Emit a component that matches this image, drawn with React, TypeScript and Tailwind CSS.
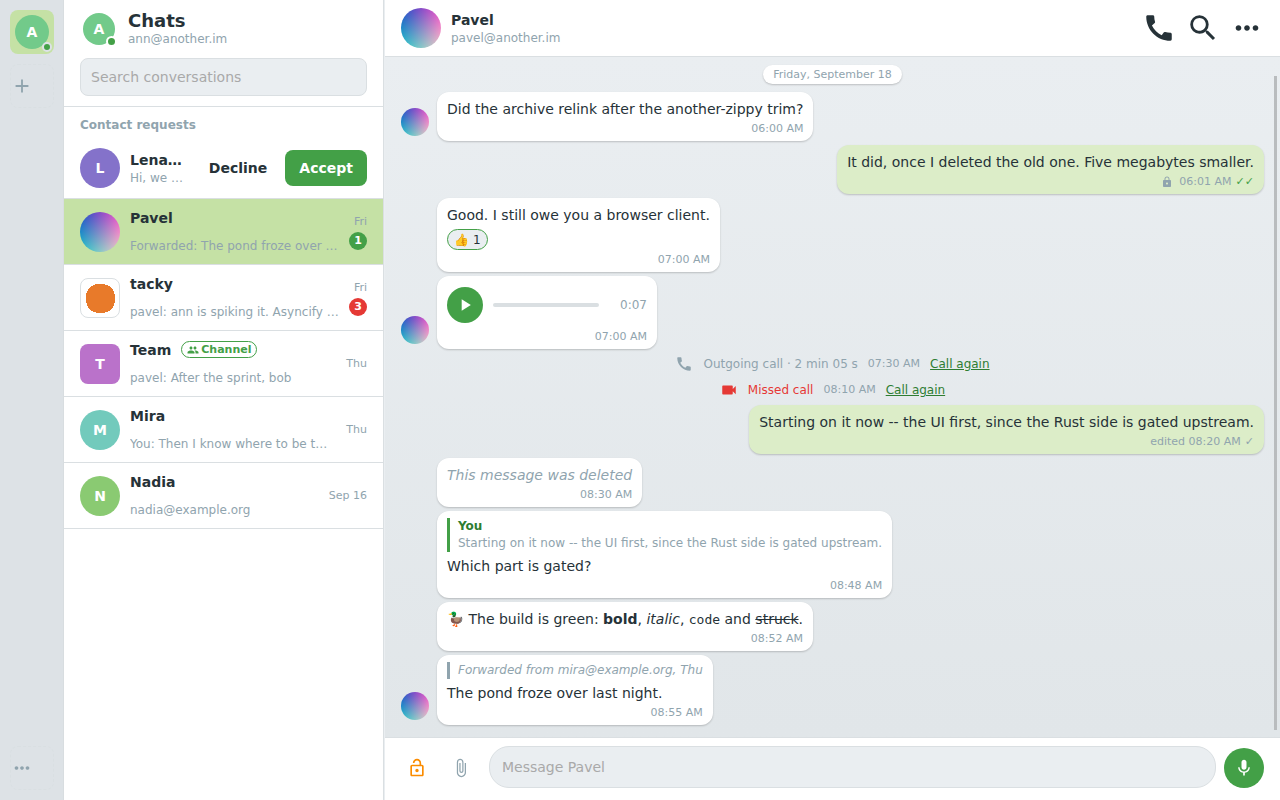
import { useState } from 'react'
import type { ReactNode } from 'react'
import {
  MdAdd,
  MdAttachFile,
  MdCall,
  MdGroup,
  MdLock,
  MdMic,
  MdMoreHoriz,
  MdOutlineLockOpen,
  MdPlayArrow,
  MdSearch,
  MdVideocam,
} from 'react-icons/md'

type Chat = {
  id: string
  name: string
  preview: string
  date: string
  avatar: ReactNode
  unread?: number
  mention?: boolean
  channel?: boolean
}

function LetterAvatar({ letter, className }: { letter: string; className: string }) {
  return (
    <span className={`flex shrink-0 items-center justify-center font-bold text-white ${className}`}>
      {letter}
    </span>
  )
}

function PavelAvatar({ className }: { className: string }) {
  return (
    <span
      className={`block shrink-0 rounded-full bg-[#0000c8] bg-[linear-gradient(to_right,#1c0000,#f00000),linear-gradient(to_bottom,#004c00,#00c800)] bg-blend-screen ${className}`}
    />
  )
}

function TackyAvatar() {
  return (
    <span className="block size-10 shrink-0 overflow-hidden rounded-lg border border-[#dadfe2] bg-white">
      <svg viewBox="0 0 38 38" className="size-full" shapeRendering="crispEdges">
        <rect x="5" y="5" width="29" height="29" rx="13" fill="#e87a2a" />
      </svg>
    </span>
  )
}

const chats: Chat[] = [
  {
    id: 'pavel',
    name: 'Pavel',
    preview: 'Forwarded: The pond froze over last night.',
    date: 'Fri',
    avatar: <PavelAvatar className="size-10" />,
    unread: 1,
  },
  {
    id: 'tacky',
    name: 'tacky',
    preview: 'pavel: ann is spiking it. Asyncify works so far',
    date: 'Fri',
    avatar: <TackyAvatar />,
    unread: 3,
    mention: true,
  },
  {
    id: 'team',
    name: 'Team',
    preview: 'pavel: After the sprint, bob',
    date: 'Thu',
    avatar: <LetterAvatar letter="T" className="size-10 rounded-lg bg-[#ba72ca]" />,
    channel: true,
  },
  {
    id: 'mira',
    name: 'Mira',
    preview: 'You: Then I know where to be twice a week',
    date: 'Thu',
    avatar: <LetterAvatar letter="M" className="size-10 rounded-full bg-[#72cabc]" />,
  },
  {
    id: 'nadia',
    name: 'Nadia',
    preview: 'nadia@example.org',
    date: 'Sep 16',
    avatar: <LetterAvatar letter="N" className="size-10 rounded-full bg-[#8aca72]" />,
  },
]

function Rail() {
  return (
    <nav className="flex w-16 shrink-0 flex-col justify-between border-r border-[#d8dde0] bg-[#dde2e6] p-2.5 pr-[9px]">
      <div className="flex flex-col gap-2.5">
        <button aria-label="ann@another.im" className="relative flex size-11 items-center justify-center rounded-lg bg-[#c5e1a5]">
          <LetterAvatar letter="A" className="size-[34px] rounded-full bg-[#72ca8a]" />
          <span className="absolute right-0.5 bottom-0.5 size-2.5 rounded-full border-2 border-[#dde2e6] bg-[#43a047]" />
        </button>
        <button aria-label="Add account" className="flex size-11 items-center rounded-lg border border-dashed border-[#d9dfe2] text-[#90a4ae]">
          <MdAdd className="size-[22px]" />
        </button>
      </div>
      <button aria-label="More" className="flex size-11 items-center rounded-lg border border-dashed border-[#d9dfe2] text-[#90a4ae]">
        <MdMoreHoriz className="size-[22px]" />
      </button>
    </nav>
  )
}

function ChatRow({ chat, selected, onSelect }: { chat: Chat; selected: boolean; onSelect: () => void }) {
  return (
    <li>
      <button
        onClick={onSelect}
        className={`flex h-[66px] w-full items-center gap-2.5 border-b border-[#dadfe2] px-4 text-left ${selected ? 'bg-[#c5e1a5]' : 'bg-white'}`}
      >
        {chat.avatar}
        <span className="flex min-w-0 flex-1 flex-col gap-2.5">
          <span className="flex h-[18px] items-center gap-2.5 text-sm font-bold">
            {chat.name}
            {chat.channel && (
              <span className="flex h-[17px] items-center gap-0.5 rounded-full border border-[#43a047] px-[5px] text-[11px] text-[#43a047]">
                <MdGroup className="size-3" />
                Channel
              </span>
            )}
          </span>
          <span className="truncate text-xs leading-[18px] text-[#90a4ae]">{chat.preview}</span>
        </span>
        <span className="flex flex-col items-end gap-[3px] text-[11px] leading-[15px] text-[#90a4ae]">
          {chat.date}
          {chat.unread && (
            <span className={`flex size-[18px] items-center justify-center rounded-full font-bold text-white ${chat.mention ? 'bg-[#e53935]' : 'bg-[#43a047]'}`}>
              {chat.unread}
            </span>
          )}
        </span>
      </button>
    </li>
  )
}

function Sidebar() {
  const [selected, setSelected] = useState('pavel')

  return (
    <aside className="flex w-80 shrink-0 flex-col border-r border-[#dadfe2] bg-white">
      <header className="border-b border-[#dadfe2] px-4 pt-2.5 pb-2.5">
        <div className="flex h-[38px] items-center gap-[13px] pl-[3px]">
          <span className="relative">
            <LetterAvatar letter="A" className="size-8 rounded-full bg-[#72ca8a] text-sm" />
            <span className="absolute -right-0.5 -bottom-0.5 size-[11px] rounded-full border-2 border-white bg-[#43a047]" />
          </span>
          <div className="pb-0.5">
            <h1 className="text-lg leading-[22px] font-bold">Chats</h1>
            <p className="text-xs leading-[14px] text-[#90a4ae]">ann@another.im</p>
          </div>
        </div>
        <input
          type="search"
          aria-label="Search conversations"
          placeholder="Search conversations"
          className="mt-2.5 block h-[38px] w-full rounded-lg border border-[#dadfe2] bg-[#eaeef1] px-2.5 text-sm outline-none placeholder:text-[#a9a9a9]"
        />
      </header>

      <section className="border-b border-[#dadfe2] px-4 pt-2.5 pb-2.5">
        <h2 className="text-xs leading-4 font-bold text-[#90a4ae]">Contact requests</h2>
        <div className="mt-[15px] flex items-center gap-2.5">
          <LetterAvatar letter="L" className="size-10 rounded-full bg-[#8472ca] text-sm" />
          <div className="min-w-0 flex-1 pt-0.5">
            <p className="truncate text-sm leading-[18px] font-bold">Lena Fischer</p>
            <p className="truncate text-xs leading-[18px] text-[#90a4ae]">Hi, we met at the meetup</p>
          </div>
          <div className="flex gap-1 text-sm font-bold">
            <button className="h-9 rounded-lg px-3.5">Decline</button>
            <button className="h-9 rounded-lg bg-[#43a047] px-3.5 text-white">Accept</button>
          </div>
        </div>
      </section>

      <ul>
        {chats.map((chat) => (
          <ChatRow key={chat.id} chat={chat} selected={chat.id === selected} onSelect={() => setSelected(chat.id)} />
        ))}
      </ul>
    </aside>
  )
}

function Bubble({ children, time, own, avatar }: { children: ReactNode; time: ReactNode; own?: boolean; avatar?: boolean }) {
  return (
    <div className={`flex items-end gap-2 ${own ? 'justify-end' : ''}`}>
      {!own && (avatar ? <PavelAvatar className="mb-[5px] size-7" /> : <span className="w-7 shrink-0" />)}
      <div className={`rounded-xl px-2.5 pt-[7px] pb-[5px] text-sm leading-[21px] shadow-[0_1px_2px_rgba(0,0,0,0.2)] ${own ? 'bg-[#dcedc8]' : 'bg-white'}`}>
        {children}
        <div className="mt-0.5 flex items-center justify-end gap-1 text-[11px] leading-[14px] text-[#90a4ae]">{time}</div>
      </div>
    </div>
  )
}

function CallRow({ icon, label, time, missed }: { icon: ReactNode; label: string; time: string; missed?: boolean }) {
  return (
    <div className={`flex h-[22px] items-center justify-center gap-2.5 text-xs ${missed ? 'text-[#e53935]' : 'text-[#90a4ae]'}`}>
      {icon}
      <span>{label}</span>
      <time className="text-[11px] text-[#90a4ae]">{time}</time>
      <button className="text-[#2e7d32] underline">Call again</button>
    </div>
  )
}

function Messages() {
  return (
    <div className="relative min-h-0 flex-1 bg-linear-to-b from-[#eaeef1] to-[#e1e6e9]">
      <div className="flex h-full flex-col gap-1 overflow-hidden px-4 py-2">
        <div className="mb-1 self-center rounded-full bg-white px-2.5 text-[11px] leading-[19px] text-[#90a4ae] shadow-[0_1px_2px_rgba(0,0,0,0.2)]">
          Friday, September 18
        </div>
        <Bubble avatar time="06:00 AM">
          <p>Did the archive relink after the another-zippy trim?</p>
        </Bubble>
        <Bubble
          own
          time={
            <>
              <MdLock className="mr-0.5 size-3" />
              06:01 AM <span className="text-[#43a047]">✓✓</span>
            </>
          }
        >
          <p>It did, once I deleted the old one. Five megabytes smaller.</p>
        </Bubble>
        <Bubble time="07:00 AM">
          <p>Good. I still owe you a browser client.</p>
          <button className="mt-[3px] mb-[3px] flex h-[21px] items-center gap-1 rounded-full border border-[#43a047] bg-[#eaeef1] px-1.5 text-xs">
            <span>👍</span>
            <span>1</span>
          </button>
        </Bubble>
        <Bubble avatar time="07:00 AM">
          <div className="flex w-[200px] items-center gap-2.5 pt-1 pb-[5px]">
            <button aria-label="Play" className="flex size-9 shrink-0 items-center justify-center rounded-full bg-[#43a047] text-white">
              <MdPlayArrow className="size-5" />
            </button>
            <span className="h-1 flex-1 rounded-full bg-[#dadfe2]" />
            <span className="w-[38px] text-right text-xs text-[#90a4ae]">0:07</span>
          </div>
        </Bubble>
        <CallRow icon={<MdCall className="size-[18px]" />} label="Outgoing call · 2 min 05 s" time="07:30 AM" />
        <CallRow missed icon={<MdVideocam className="size-[18px]" />} label="Missed call" time="08:10 AM" />
        <Bubble own time={<>edited 08:20 AM <span>✓</span></>}>
          <p>Starting on it now -- the UI first, since the Rust side is gated upstream.</p>
        </Bubble>
        <Bubble time="08:30 AM">
          <p className="text-[#90a4ae] italic">This message was deleted</p>
        </Bubble>
        <Bubble time="08:48 AM">
          <blockquote className="mb-1 border-l-[3px] border-[#43a047] pl-2 text-xs leading-[17px] text-[#90a4ae]">
            <p className="font-bold text-[#2e7d32]">You</p>
            <p>Starting on it now -- the UI first, since the Rust side is gated upstream.</p>
          </blockquote>
          <p>Which part is gated?</p>
        </Bubble>
        <Bubble time="08:52 AM">
          <p>
            🦆 The build is green: <strong>bold</strong>, <em>italic</em>,{' '}
            <code className="font-['DejaVu_Sans_Mono',monospace] text-[13px]">code</code> and <s>struck</s>.
          </p>
        </Bubble>
        <Bubble avatar time="08:55 AM">
          <blockquote className="mb-1 border-l-[3px] border-[#90a4ae] pl-2 text-xs leading-[17px] text-[#90a4ae] italic">
            Forwarded from mira@example.org, Thu
          </blockquote>
          <p>The pond froze over last night.</p>
        </Bubble>
      </div>
      {/* Scroll thumb */}
      <div className="absolute top-[19px] right-[3px] bottom-[7px] w-[3px] bg-[#b9bcbe]" />
    </div>
  )
}

function Conversation() {
  const [draft, setDraft] = useState('')

  return (
    <main className="ml-px flex min-w-0 flex-1 flex-col bg-white">
      <header className="flex h-[57px] shrink-0 items-center gap-2.5 border-b border-[#dadfe2] px-4">
        <PavelAvatar className="size-10" />
        <div className="min-w-0 flex-1 pt-0.5">
          <h2 className="text-sm leading-[18px] font-bold">Pavel</h2>
          <p className="text-xs leading-[18px] text-[#90a4ae]">pavel@another.im</p>
        </div>
        <div className="flex items-center gap-2.5">
          <button aria-label="Call">
            <MdCall className="size-[34px]" />
          </button>
          <button aria-label="Search">
            <MdSearch className="size-[34px]" />
          </button>
          <button aria-label="More">
            <MdMoreHoriz className="size-[34px]" />
          </button>
        </div>
      </header>

      <Messages />

      <footer className="flex shrink-0 items-end gap-2 border-t border-[#dadfe2] pt-2 pr-4 pb-3 pl-3">
        <div className="flex gap-1">
          <button aria-label="Encryption" className="flex size-10 items-center justify-center text-[#fb8c00]">
            <MdOutlineLockOpen className="size-5" />
          </button>
          <button aria-label="Attach file" className="flex size-10 items-center justify-center text-[#90a4ae]">
            <MdAttachFile className="size-5" />
          </button>
        </div>
        <input
          aria-label="Message Pavel"
          placeholder="Message Pavel"
          value={draft}
          onChange={(e) => setDraft(e.target.value)}
          className="h-[42px] min-w-0 flex-1 rounded-[20px] border border-[#dadfe2] bg-[#eaeef1] px-3 text-sm outline-none placeholder:text-[#a9a9a9]"
        />
        <button aria-label="Record voice message" className="flex size-10 items-center justify-center rounded-full bg-[#43a047] text-white">
          <MdMic className="size-5" />
        </button>
      </footer>
    </main>
  )
}

export default function App() {
  return (
    <div className="flex h-screen overflow-hidden bg-[#eaeef1] font-['DejaVu_Sans',sans-serif] text-sm text-[#263238]">
      <Rail />
      <Sidebar />
      <Conversation />
    </div>
  )
}
